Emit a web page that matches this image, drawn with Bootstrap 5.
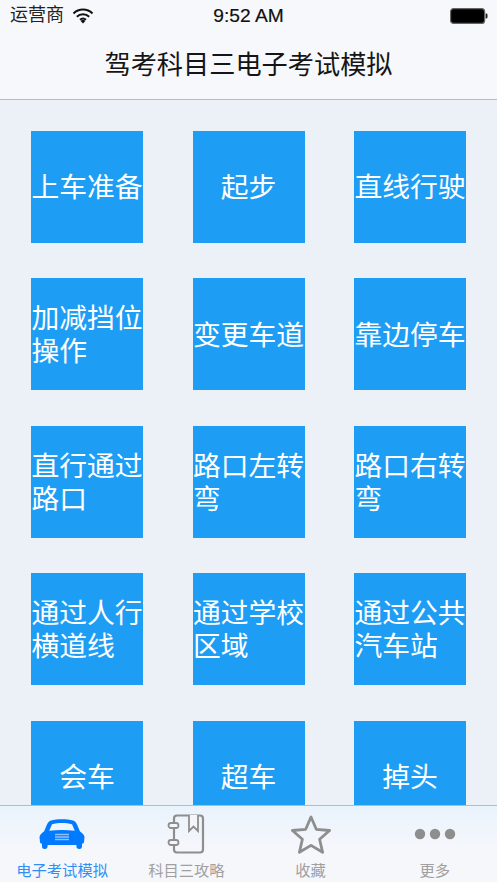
<!DOCTYPE html>
<html lang="zh-CN"><head><meta charset="utf-8">
<link href="https://cdn.jsdelivr.net/npm/bootstrap@5.3.0/dist/css/bootstrap.min.css" rel="stylesheet">
<style>
html,body{height:882px;overflow:hidden}
body{font-family:"Liberation Sans","Noto Sans CJK SC",sans-serif;background:#ecf0f7;color:#111}
.shell{height:882px;width:497px}
.topbar{height:100px;background:#f7f8fb;border-bottom:1px solid #b9bbbe;flex:none}
.statusline{height:31px;padding:0 9px 0 10px;font-size:18px;color:#222}
.clock{left:0;right:0;top:4px;text-align:center;font-size:19.200px;color:#111;line-height:24px;-webkit-text-stroke:.2px #111}
.pagetitle{font-size:26.200px;line-height:32px;margin-top:18px;text-align:center;color:#151515}
.tilegrid{display:grid;grid-template-columns:repeat(3,112px);justify-content:space-between;row-gap:35.5px;padding:30.700px 31px 0;align-content:start}
.tile{height:112px;background:#1e9df5;color:#fff;font-size:27.800px;line-height:33px;padding:2px .4px 0;overflow:hidden;word-break:break-all}
.tabbar{height:77px;flex:none;background:linear-gradient(#e9f3fc,#f6f7fb 60%);border-top:1px solid #b9bbbe;position:relative;z-index:2}
.tabitem{width:25%;font-size:15.300px;line-height:18px;color:#a0a0a0;padding-bottom:2px}
.tabitem.active{color:#2f8ff5}
.tabicon{height:46px;margin-bottom:5px}
</style></head><body>
<div class="shell d-flex flex-column position-relative">
<header class="topbar position-relative">
<div class="statusline d-flex align-items-center justify-content-between">
<div class="d-flex align-items-center gap-2"><span>运营商</span>
<svg width="22" height="16" viewBox="0 0 22 16"><path d="M1.500 5.500a13.500 13.500 0 0 1 19 0M4.800 8.800a9 9 0 0 1 12.400 0M8 11.800a4.600 4.600 0 0 1 6 0" fill="none" stroke="#111" stroke-width="2"/><path d="M11 15.500l-2.400-2.600a3.400 3.400 0 0 1 4.800 0z" fill="#111"/></svg></div>
<svg width="38" height="16" viewBox="0 0 38 16"><rect x=".6" y=".6" width="34" height="14.800" rx="3" fill="#000" stroke="#666" stroke-width="1.200"/><path d="M35.600 5.500h.6a1.300 1.300 0 0 1 1.300 1.300v2.400a1.300 1.300 0 0 1-1.300 1.300h-.6z" fill="#222"/></svg>
</div>
<div class="clock position-absolute">9:52 AM</div>
<div class="pagetitle">驾考科目三电子考试模拟</div>
</header>
<main class="tilegrid flex-grow-1 overflow-hidden">
<div class="tile d-flex align-items-center justify-content-center">上车准备</div>
<div class="tile d-flex align-items-center justify-content-center">起步</div>
<div class="tile d-flex align-items-center justify-content-center">直线行驶</div>
<div class="tile d-flex align-items-center">加减挡位操作</div>
<div class="tile d-flex align-items-center justify-content-center">变更车道</div>
<div class="tile d-flex align-items-center justify-content-center">靠边停车</div>
<div class="tile d-flex align-items-center">直行通过路口</div>
<div class="tile d-flex align-items-center">路口左转弯</div>
<div class="tile d-flex align-items-center">路口右转弯</div>
<div class="tile d-flex align-items-center">通过人行横道线</div>
<div class="tile d-flex align-items-center">通过学校区域</div>
<div class="tile d-flex align-items-center">通过公共汽车站</div>
<div class="tile d-flex align-items-center justify-content-center">会车</div>
<div class="tile d-flex align-items-center justify-content-center">超车</div>
<div class="tile d-flex align-items-center justify-content-center">掉头</div>
</main>
<nav class="tabbar d-flex">
<div class="tabitem active d-flex flex-column align-items-center justify-content-end">
<div class="tabicon d-flex align-items-center"><svg width="46" height="34" viewBox="0 -1 46 34"><path d="M12 2.500C18 .8 28 .8 34 2.500c2 .6 3 2 4 4l3 7c2.500 1.500 4 3 4.500 5.500L45 24c0 1-.8 1.600-2 1.800V28a2.800 2.800 0 0 1-5.600.3V27H8.600v1.300A2.800 2.800 0 0 1 3 28v-2.200C1.800 25.600 1 25 1 24l-.5-5c.5-2.500 2-4 4.500-5.500l3-7c1-2 2-3.400 4-4zM13 6.300l-2.800 6.400c8-1 17.600-1 25.600 0L33 6.300c-6-1.600-14-1.600-20 0z" fill="#007aff" fill-rule="evenodd"/><path d="M16 16.500h14M16 19h14M16 21.500h14" stroke="#8fc0fa" stroke-width="1.300"/></svg></div>
<span>电子考试模拟</span></div>
<div class="tabitem d-flex flex-column align-items-center justify-content-end">
<div class="tabicon d-flex align-items-center"><svg width="38" height="42" viewBox="0 0 38 42"><path d="M7 5.500a3 3 0 0 1 3-3h23a3 3 0 0 1 3 3v31a3 3 0 0 1-3 3H10a3 3 0 0 1-3-3z" fill="none" stroke="#8e8e8e" stroke-width="2.200"/><path d="M22 2v16l4.500-4.500L31 18V2" fill="#f4f6fa" stroke="#8e8e8e" stroke-width="1.800"/><rect x="1.500" y="10" width="10" height="5" rx="2.500" fill="#f4f6fa" stroke="#8e8e8e" stroke-width="1.800"/><rect x="1.500" y="27" width="10" height="5" rx="2.500" fill="#f4f6fa" stroke="#8e8e8e" stroke-width="1.800"/></svg></div>
<span>科目三攻略</span></div>
<div class="tabitem d-flex flex-column align-items-center justify-content-end">
<div class="tabicon d-flex align-items-center"><svg width="42" height="40" viewBox="0 0 42 40"><path d="M21 3l5.300 12.300 13.300 1.200-10 8.800 3 13L21 31.400 9.400 38.300l3-13-10-8.800 13.300-1.200z" fill="none" stroke="#8e8e8e" stroke-width="2.800" stroke-linejoin="round"/></svg></div>
<span>收藏</span></div>
<div class="tabitem d-flex flex-column align-items-center justify-content-end">
<div class="tabicon d-flex align-items-center"><svg width="42" height="12" viewBox="0 0 42 12"><circle cx="6" cy="6" r="5.200" fill="#8e8e8e"/><circle cx="21" cy="6" r="5.200" fill="#8e8e8e"/><circle cx="36" cy="6" r="5.200" fill="#8e8e8e"/></svg></div>
<span>更多</span></div>
</nav>
</div>
<script src="https://cdn.jsdelivr.net/npm/bootstrap@5.3.0/dist/js/bootstrap.bundle.min.js"></script>
</body></html>
